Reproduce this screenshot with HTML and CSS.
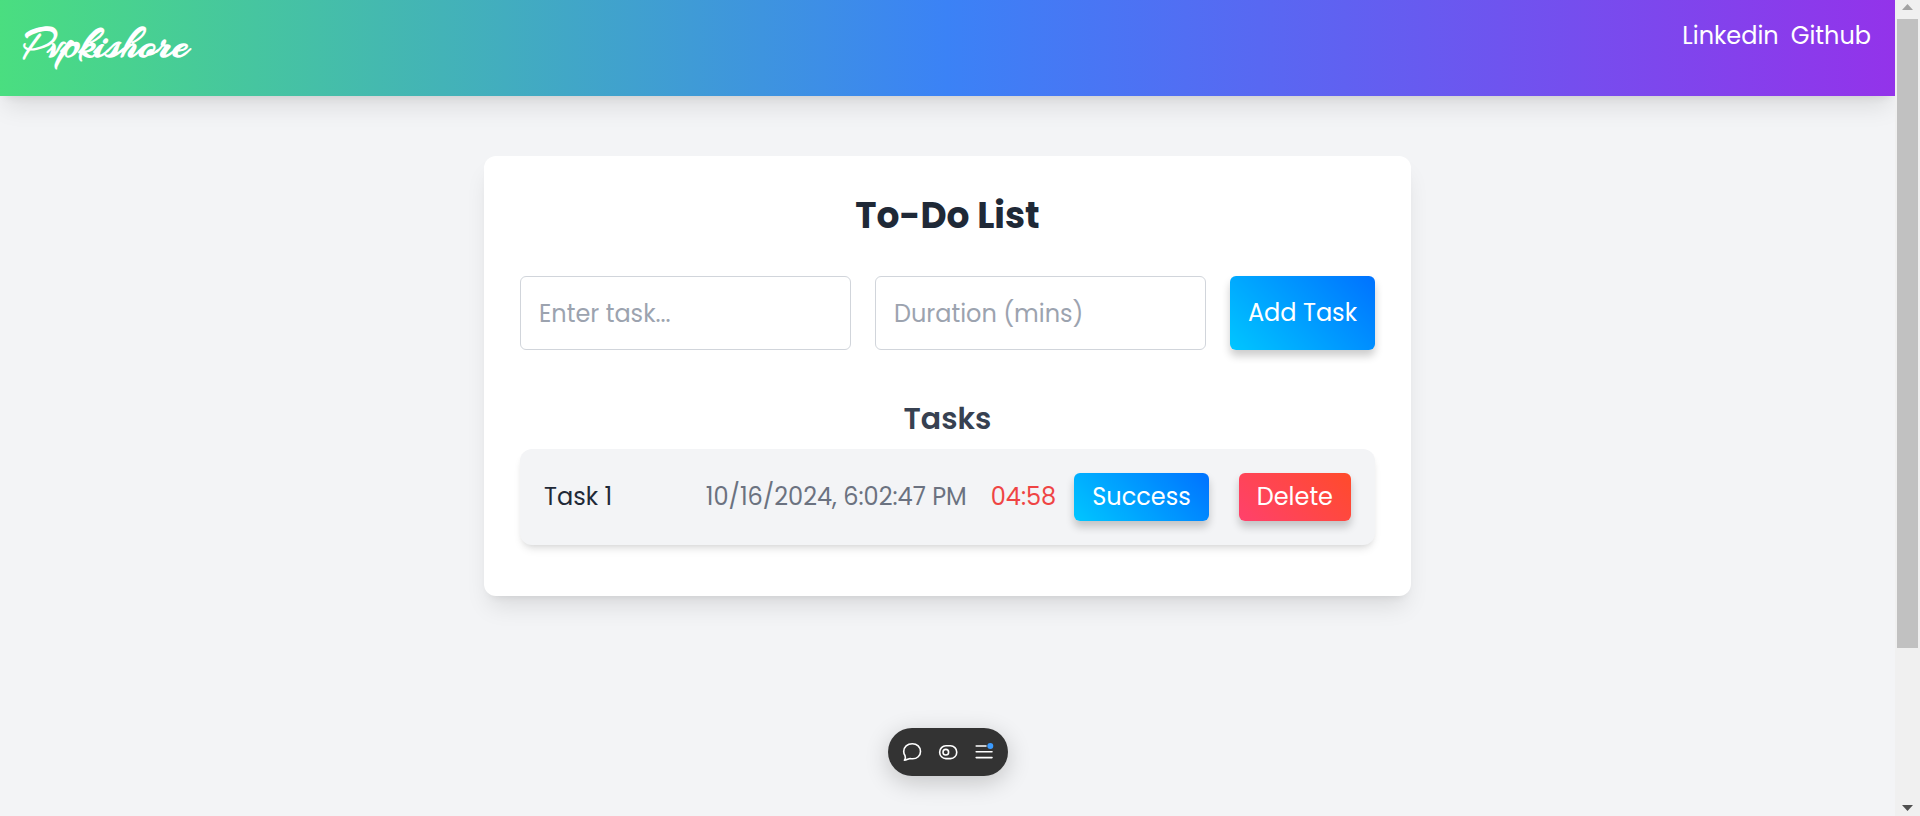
FILE: index.html
```html
<!DOCTYPE html>
<html lang="en">
<head>
<meta charset="utf-8">
<meta name="viewport" content="width=device-width, initial-scale=1">
<title>To-Do List</title>
<link rel="stylesheet" href="styles.css">
</head>
<body>
<div class="window">
  <div class="page">
    <header class="header">
      <div class="logo">Pvpkishore</div>
      <nav class="nav">
        <a href="#linkedin">Linkedin</a>
        <a href="#github">Github</a>
      </nav>
    </header>
    <main class="card">
      <h1 class="title">To-Do List</h1>
      <form class="form">
        <input class="field" type="text" placeholder="Enter task..." aria-label="Task">
        <input class="field" type="text" inputmode="numeric" placeholder="Duration (mins)" aria-label="Duration in minutes">
        <button class="button button-add" type="button">Add Task</button>
      </form>
      <h2 class="subtitle">Tasks</h2>
      <ul class="tasks">
        <li class="task">
          <span class="task-name">Task 1</span>
          <span class="task-date">10/16/2024, 6:02:47 PM</span>
          <span class="task-timer">04:58</span>
          <button class="button button-success" type="button">Success</button>
          <button class="button button-delete" type="button">Delete</button>
        </li>
      </ul>
    </main>
    <div class="toolbar">
      <button class="tool" type="button" aria-label="Comment">
        <svg viewBox="0 0 20 20"><path d="M2.4 18.2C3.6 16.8 3.7 15.2 3 13.6C2.1 12.4 1.7 11 1.7 9.6C1.7 5 5.4 1.7 10.3 1.7C15 1.7 18.5 5 18.5 9.4C18.5 13.8 15 16.8 10.6 16.8C9.2 16.8 8.4 16.4 7.2 16.7C5.6 17.2 4.2 18.2 2.4 18.2Z"/></svg>
      </button>
      <button class="tool" type="button" aria-label="Layout">
        <svg viewBox="0 0 20 20"><rect x="1.7" y="3.8" width="17" height="12.8" rx="6.2"/><circle cx="7.8" cy="10.2" r="2.8"/></svg>
      </button>
      <button class="tool" type="button" aria-label="Menu">
        <svg viewBox="0 0 20 20"><path d="M2.2 4H12M2.2 9.8H18M2.2 15.6H18"/><circle class="dot" cx="16.3" cy="4" r="3"/></svg>
      </button>
    </div>
  </div>
  <div class="scrollbar" aria-hidden="true">
    <svg class="arrow" viewBox="0 0 11 6"><path d="M5.5 0L11 6H0Z" fill="#a3a3a3"/></svg>
    <div class="track"><div class="thumb"></div></div>
    <svg class="arrow" viewBox="0 0 11 6"><path d="M0 0H11L5.5 6Z" fill="#505050"/></svg>
  </div>
</div>
</body>
</html>
```
FILE: styles.css
```css
* { box-sizing: border-box; }

body {
  margin: 0;
  font-family: Poppins, Inter, "Liberation Sans", sans-serif;
  font-size: 24px;
  line-height: 36px;
  color: #1f2937;
  background: #f3f4f6;
}

button, input { font: inherit; margin: 0; }

.window { display: flex; min-height: 100vh; }

.page { flex: 1; min-width: 0; }

.header {
  display: flex;
  justify-content: space-between;
  align-items: flex-start;
  height: 96px;
  padding: 18px 24px;
  background: linear-gradient(to right, #4ade80, #3b82f6, #9333ea);
  box-shadow: 0 15px 23px -5px rgba(0, 0, 0, .1), 0 6px 9px -6px rgba(0, 0, 0, .1);
}

.logo {
  font-family: Arizonia, cursive;
  font-size: 45px;
  font-weight: 700;
  line-height: 54px;
  color: #fff;
}

.nav { display: flex; gap: 12px; }

.nav a { color: #fff; text-decoration: none; }

.card {
  max-width: 927px;
  margin: 60px auto 0;
  padding: 36px;
  background: #fff;
  border-radius: 12px;
  box-shadow: 0 15px 23px -5px rgba(0, 0, 0, .1), 0 6px 9px -6px rgba(0, 0, 0, .1);
}

.title {
  margin: 0 0 36px;
  font-size: 36px;
  font-weight: 700;
  line-height: 48px;
  text-align: center;
}

.form { display: flex; gap: 24px; }

.field {
  flex: 1;
  min-width: 0;
  height: 74px;
  padding: 18px;
  color: #1f2937;
  background: #fff;
  border: 1px solid #d1d5db;
  border-radius: 6px;
}

.field::placeholder { color: #9ca3af; opacity: 1; }

.button {
  height: 48px;
  padding: 0 18px;
  color: #fff;
  white-space: nowrap;
  border: 0;
  border-radius: 6px;
  box-shadow: 0 6px 9px rgba(0, 0, 0, .2);
  cursor: pointer;
}

.button-add { height: 74px; background: linear-gradient(45deg, #00c6ff, #0072ff); }
.button-success { background: linear-gradient(45deg, #00c6ff, #0072ff); }
.button-delete { margin-left: 30px; background: linear-gradient(45deg, #ff416c, #ff4b2b); }

.subtitle {
  margin: 48px 0 9px;
  font-size: 30px;
  font-weight: 600;
  line-height: 42px;
  text-align: center;
  color: #374151;
}

.tasks { margin: 0 0 15px; padding: 0; list-style: none; }

.task {
  display: flex;
  align-items: center;
  padding: 24px;
  background: #f3f4f6;
  border-radius: 12px;
  box-shadow: 0 6px 9px -2px rgba(0, 0, 0, .1), 0 3px 6px -3px rgba(0, 0, 0, .1);
}

.task-name { flex: 1; }
.task-date { margin-right: 24px; color: #6b7280; white-space: nowrap; }
.task-timer { margin-right: 18px; color: #ef4444; }

.toolbar {
  position: fixed;
  bottom: 40px;
  left: calc(50% - 72px);
  display: flex;
  justify-content: space-between;
  align-items: center;
  width: 120px;
  height: 48px;
  padding: 0 14px;
  background: #333;
  border-radius: 24px;
  box-shadow: 0 6px 24px rgba(0, 0, 0, .2);
}

.tool {
  display: flex;
  padding: 0;
  background: none;
  border: 0;
  cursor: pointer;
}

.tool svg {
  width: 20px;
  height: 20px;
  fill: none;
  stroke: #fff;
  stroke-width: 1.6;
  stroke-linecap: round;
  stroke-linejoin: round;
}

.tool .dot { fill: #3b9bff; stroke: none; }

.scrollbar {
  display: flex;
  flex-direction: column;
  align-items: center;
  width: 25px;
  padding: 4px 0 5px;
  background: #f0f0f0;
}

.arrow { width: 11px; height: 6px; }

.track { flex: 1; width: 21px; padding: 9px 0; }

.thumb { height: 81%; background: #c1c1c1; }
```
